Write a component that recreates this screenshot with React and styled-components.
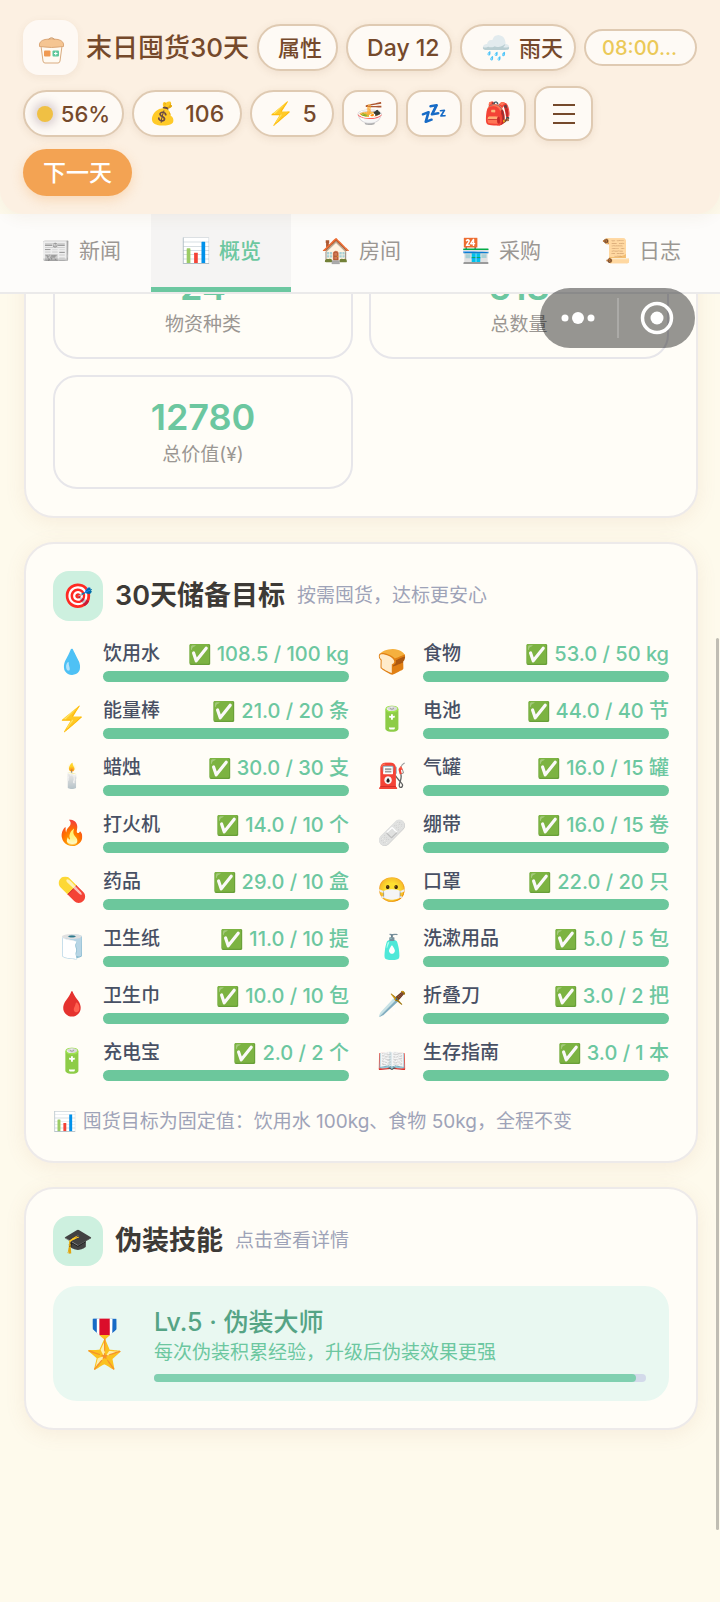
import styled, { createGlobalStyle } from "styled-components";

const GlobalStyle = createGlobalStyle`
  * {
    box-sizing: border-box;
  }

  body {
    margin: 0;
    background: #fefaec;
    color: #3d3a36;
    font-family: Inter, "Noto Sans CJK SC", "Noto Color Emoji", sans-serif;
  }

  button {
    font-family: inherit;
    cursor: pointer;
  }
`;

const Page = styled.div`
  position: relative;
  min-height: 100vh;
`;

const Top = styled.div`
  position: relative;
  z-index: 2;
`;

const Header = styled.header`
  position: relative;
  z-index: 1;
  display: flex;
  flex-direction: column;
  gap: 8px;
  padding: 20px 20px 18px 23px;
  background: #fcf0e2;
  border-radius: 0 0 24px 24px;
  box-shadow: 0 4px 16px rgba(120, 80, 40, 0.06);
`;

const HeaderRow = styled.div`
  display: flex;
  align-items: center;
  gap: 8px;
  padding-bottom: ${props => (props.$first ? "3px" : "0")};
`;

const Logo = styled.div`
  display: flex;
  align-items: center;
  justify-content: center;
  width: 55px;
  height: 55px;
  background: #fef9f4;
  border-radius: 16px;
  box-shadow: 0 2px 8px rgba(120, 80, 40, 0.08);
`;

const Title = styled.h1`
  margin: 0;
  font-size: 26px;
  font-weight: 500;
  line-height: 36px;
  color: #75492b;
  white-space: nowrap;
`;

const Pill = styled.button`
  display: flex;
  flex-shrink: 0;
  align-items: center;
  justify-content: center;
  gap: 8px;
  width: ${props => props.$width};
  height: 47px;
  padding: 0;
  border: 2px solid #dfcab2;
  border-radius: ${props => (props.$square ? "16px" : "24px")};
  background: #fefaf5;
  box-shadow: 0 2px 8px rgba(120, 80, 40, 0.1);
  color: #75492b;
  font-size: ${props => props.$size || "23px"};
  font-weight: 500;
  line-height: 30px;
  white-space: nowrap;
`;

const TextPill = styled(Pill)`
  justify-content: flex-start;
  padding-left: 19px;
`;

const TimePill = styled(Pill)`
  justify-content: flex-start;
  height: 37px;
  padding-left: 16px;
  color: #ebc958;
  box-shadow: none;
`;

const MenuButton = styled(Pill)`
  height: 55px;
`;

const NextButton = styled(Pill)`
  border: 0;
  background: #f3a353;
  color: #fff;
  box-shadow: 0 4px 12px rgba(243, 163, 83, 0.3);
`;

const Emoji = styled.span`
  font-family: "Noto Color Emoji", sans-serif;
  font-size: ${props => props.$size || "24px"};
  line-height: 1;
`;

const Sun = styled.span`
  width: 16px;
  height: 16px;
  border-radius: 50%;
  background: #f0c044;
  box-shadow: 0 0 8px 4px rgba(120, 90, 110, 0.25);
`;

const Tabs = styled.nav`
  display: flex;
  height: 80px;
  padding: 0 9px 0 11px;
  background: #fdfcfa;
  border-bottom: 2px solid #ebeaea;
`;

const Tab = styled.button`
  display: flex;
  flex: 1;
  align-items: center;
  justify-content: center;
  gap: 8px;
  padding: 0 0 5px;
  border: 0;
  background: ${props => (props.$active ? "#f5f4f3" : "transparent")};
  box-shadow: ${props => (props.$active ? "inset 0 -5px #6cc7a0" : "none")};
  color: ${props => (props.$active ? "#6cc7a0" : "#9b9793")};
  font-size: 21px;
  font-weight: ${props => (props.$active ? 500 : 400)};
  line-height: 30px;
`;

const Main = styled.main`
  display: flex;
  flex-direction: column;
  gap: 24px;
  padding: 0 22px 100px 24px;
  overflow: hidden;
`;

const Card = styled.section`
  margin-top: ${props => (props.$scrolled ? "-78px" : "0")};
  padding: 27px;
  border: 2px solid #edeaea;
  border-radius: 30px;
  background: #fffdf7;
  box-shadow: 0 4px 20px rgba(180, 120, 80, 0.1);
`;

const Stats = styled.div`
  display: grid;
  grid-template-columns: 1fr 1fr;
  gap: 16px;
`;

const Stat = styled.div`
  display: flex;
  flex-direction: column;
  align-items: center;
  height: 114px;
  padding-top: 17px;
  border: 2px solid #e7e6ea;
  border-radius: 24px;
`;

const StatValue = styled.strong`
  font-size: 36px;
  font-weight: 600;
  line-height: 46px;
  color: #6cc7a0;
`;

const StatLabel = styled.span`
  font-size: 19px;
  line-height: 30px;
  color: #9b9793;
`;

const CardHead = styled.div`
  display: flex;
  align-items: center;
  gap: 12px;
  margin-bottom: 20px;
`;

const Badge = styled.div`
  display: flex;
  align-items: center;
  justify-content: center;
  width: 50px;
  height: 50px;
  border-radius: 16px;
  background: #cdf0df;
`;

const CardTitle = styled.h2`
  margin: 0;
  font-size: 27px;
  font-weight: 600;
  line-height: 36px;
  color: #3d3a36;
`;

const Hint = styled.span`
  font-size: 19px;
  line-height: 28px;
  color: #9ea3b8;
`;

const Goals = styled.div`
  display: grid;
  grid-template-columns: 1fr 1fr;
  gap: 16px 24px;
`;

const GoalRow = styled.div`
  display: flex;
  align-items: center;
  gap: 12px;
`;

const GoalIcon = styled.div`
  width: 38px;
  text-align: center;
`;

const GoalBody = styled.div`
  flex: 1;
  min-width: 0;
`;

const GoalText = styled.div`
  display: flex;
  justify-content: space-between;
  margin-bottom: 4px;
  font-size: 19px;
  font-weight: 500;
  line-height: 26px;
  color: #485064;
  white-space: nowrap;
`;

const Amount = styled.span`
  display: flex;
  align-items: center;
  gap: 5px;
  font-size: 20px;
  color: #6cc7a0;
`;

const Track = styled.div`
  height: ${props => props.$height};
  border-radius: 6px;
  background: ${props => props.$color || "#6cc79c"};
`;

const Fill = styled.div`
  height: 100%;
  border-radius: 6px;
  background: ${props => props.$color};
`;

const Note = styled.p`
  display: flex;
  align-items: center;
  gap: 6px;
  margin: 28px 0 0;
  font-size: 19px;
  line-height: 25px;
  color: #9ea3b8;
`;

const Skill = styled.div`
  display: flex;
  align-items: center;
  gap: 23px;
  height: 115px;
  padding: 0 23px;
  border-radius: 24px;
  background: #e9f8f1;
`;

const Medal = styled.div`
  width: 55px;
  text-align: center;
`;

const SkillBody = styled.div`
  flex: 1;
`;

const SkillTitle = styled.h3`
  margin: 0;
  font-size: 25px;
  font-weight: 500;
  line-height: 34px;
  color: #55a485;
`;

const SkillText = styled.p`
  margin: 0 0 7px;
  font-size: 19px;
  line-height: 28px;
  color: #6cc7a0;
`;

const Capsule = styled.div`
  position: absolute;
  z-index: 3;
  top: 288px;
  right: 25px;
  display: flex;
  align-items: center;
  width: 155px;
  height: 60px;
  border-radius: 30px;
  background: rgba(0, 0, 0, 0.41);
`;

const CapsuleButton = styled.button`
  display: flex;
  flex: 1;
  align-items: center;
  justify-content: center;
  height: 40px;
  padding: 0;
  border: 0;
  background: none;

  & + & {
    border-left: 2px solid rgba(255, 255, 255, 0.2);
  }
`;

const ScrollThumb = styled.div`
  position: absolute;
  top: 638px;
  right: 1px;
  width: 3px;
  height: 892px;
  border-radius: 2px;
  background: #c0bdb3;
`;

const tabs = [
  ["📰", "新闻"],
  ["📊", "概览"],
  ["🏠", "房间"],
  ["🏪", "采购"],
  ["📜", "日志"]
];

const stats = [
  ["24", "物资种类"],
  ["518", "总数量"],
  ["12780", "总价值(¥)"]
];

const goals = [
  ["💧", "饮用水", "108.5 / 100 kg"],
  ["🍞", "食物", "53.0 / 50 kg"],
  ["⚡", "能量棒", "21.0 / 20 条"],
  ["🔋", "电池", "44.0 / 40 节"],
  ["🕯️", "蜡烛", "30.0 / 30 支"],
  ["⛽", "气罐", "16.0 / 15 罐"],
  ["🔥", "打火机", "14.0 / 10 个"],
  ["🩹", "绷带", "16.0 / 15 卷"],
  ["💊", "药品", "29.0 / 10 盒"],
  ["😷", "口罩", "22.0 / 20 只"],
  ["🧻", "卫生纸", "11.0 / 10 提"],
  ["🧴", "洗漱用品", "5.0 / 5 包"],
  ["🩸", "卫生巾", "10.0 / 10 包"],
  ["🗡️", "折叠刀", "3.0 / 2 把"],
  ["🔋", "充电宝", "2.0 / 2 个"],
  ["📖", "生存指南", "3.0 / 1 本"]
];

const skillProgress = 98;

function BucketIcon() {
  return (
    <svg width="28" height="32" viewBox="0 0 28 32" fill="none">
      <path d="M4 14L6 29Q6.300 31 8 31H21Q22.700 31 23 29L25 14Z" fill="#fffaf2" stroke="#d9ac80" />
      <path d="M2.500 14.500Q1.500 9 8 7.500Q14.500 6 21 7.500Q27.500 9 26.500 14.500Q14.500 16.500 2.500 14.500Z" fill="#f5c592" stroke="#dca878" />
      <path d="M11.500 7.500Q14.500 4 17.500 7.500" stroke="#cf9c6c" />
      <rect x="7" y="18.500" width="6.500" height="6" rx="1" fill="#f09a52" />
      <rect x="15.500" y="18.500" width="6.500" height="6" rx="1" fill="#5cc79b" />
      <path d="M17 21.500h3.500M18.750 19.750v3.500" stroke="#fff" />
    </svg>
  );
}

function App() {
  return (
    <Page>
      <GlobalStyle />
      <Top>
        <Header>
          <HeaderRow $first>
            <Logo>
              <BucketIcon />
            </Logo>
            <Title>末日囤货30天</Title>
            <TextPill $width="81px" $size="22px">属性</TextPill>
            <TextPill $width="106px" $size="23px">Day 12</TextPill>
            <TextPill $width="116px" $size="22px">
              <Emoji>🌧️</Emoji>雨天
            </TextPill>
            <TimePill $width="113px" $size="20px">08:00...</TimePill>
          </HeaderRow>
          <HeaderRow>
            <Pill $width="101px" $size="22px"><Sun />56%</Pill>
            <Pill $width="110px"><Emoji $size="22px">💰</Emoji>106</Pill>
            <Pill $width="84px"><Emoji $size="22px">⚡</Emoji>5</Pill>
            <Pill $square $width="56px" aria-label="食物"><Emoji $size="22px">🍜</Emoji></Pill>
            <Pill $square $width="56px" aria-label="睡觉"><Emoji $size="22px">💤</Emoji></Pill>
            <Pill $square $width="56px" aria-label="背包"><Emoji $size="22px">🎒</Emoji></Pill>
            <MenuButton $square $width="59px" aria-label="菜单">
              <svg width="22" height="22" viewBox="0 0 22 22" stroke="#75492b" strokeWidth="2">
                <path d="M0 2h22M0 11h22M0 20h22" />
              </svg>
            </MenuButton>
          </HeaderRow>
          <HeaderRow>
            <NextButton $width="109px">下一天</NextButton>
          </HeaderRow>
        </Header>
        <Tabs>
          {tabs.map(([icon, label]) => (
            <Tab key={label} $active={label === "概览"}>
              <Emoji>{icon}</Emoji>
              {label}
            </Tab>
          ))}
        </Tabs>
      </Top>

      <Main>
        <Card $scrolled>
          <Stats>
            {stats.map(([value, label]) => (
              <Stat key={label}>
                <StatValue>{value}</StatValue>
                <StatLabel>{label}</StatLabel>
              </Stat>
            ))}
          </Stats>
        </Card>

        <Card>
          <CardHead>
            <Badge><Emoji>🎯</Emoji></Badge>
            <CardTitle>30天储备目标</CardTitle>
            <Hint>按需囤货，达标更安心</Hint>
          </CardHead>
          <Goals>
            {goals.map(([icon, name, amount]) => (
              <GoalRow key={name}>
                <GoalIcon><Emoji>{icon}</Emoji></GoalIcon>
                <GoalBody>
                  <GoalText>
                    {name}
                    <Amount><Emoji $size="19px">✅</Emoji>{amount}</Amount>
                  </GoalText>
                  <Track $height="11px" />
                </GoalBody>
              </GoalRow>
            ))}
          </Goals>
          <Note>
            <Emoji $size="19px">📊</Emoji>
            囤货目标为固定值：饮用水 100kg、食物 50kg，全程不变
          </Note>
        </Card>

        <Card>
          <CardHead>
            <Badge><Emoji>🎓</Emoji></Badge>
            <CardTitle>伪装技能</CardTitle>
            <Hint>点击查看详情</Hint>
          </CardHead>
          <Skill>
            <Medal><Emoji $size="46px">🎖️</Emoji></Medal>
            <SkillBody>
              <SkillTitle>Lv.5 · 伪装大师</SkillTitle>
              <SkillText>每次伪装积累经验，升级后伪装效果更强</SkillText>
              <Track $height="8px" $color="#d3daea">
                <Fill $color="#80d0b0" style={{ width: `${skillProgress}%` }} />
              </Track>
            </SkillBody>
          </Skill>
        </Card>
      </Main>

      <Capsule>
        <CapsuleButton aria-label="更多">
          <svg width="34" height="14" viewBox="0 0 34 14" fill="#fff">
            <circle cx="4" cy="7" r="3.500" />
            <circle cx="17" cy="7" r="6" />
            <circle cx="30" cy="7" r="3.500" />
          </svg>
        </CapsuleButton>
        <CapsuleButton aria-label="关闭">
          <svg width="34" height="34" viewBox="0 0 34 34" fill="none">
            <circle cx="17" cy="17" r="14.500" stroke="#fff" strokeWidth="3.500" />
            <circle cx="17" cy="17" r="6.500" fill="#fff" />
          </svg>
        </CapsuleButton>
      </Capsule>
      <ScrollThumb />
    </Page>
  );
}

export default App;
